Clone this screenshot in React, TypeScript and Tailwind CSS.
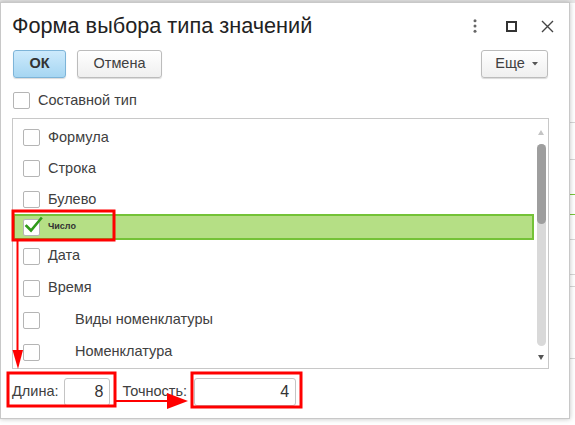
import React from 'react';

const font = { fontFamily: '"Liberation Sans", Arial, sans-serif' };

const Box = ({ checked = false }: { checked?: boolean }) => (
  <span className="relative flex h-[17px] w-[17px] shrink-0 items-center justify-center rounded-[2px] border border-[#b5b5b5] bg-white">
    {checked && (
      <svg width="20" height="18" viewBox="0 0 20 18" className="absolute -top-[4px] left-[0px]">
        <path d="M2.5 10 L7 14.5 L17 2.5" fill="none" stroke="#2f9a1a" strokeWidth="2.6" strokeLinecap="square" />
      </svg>
    )}
  </span>
);

const rows = [
  { label: 'Формула' },
  { label: 'Строка' },
  { label: 'Булево' },
];

const rowsAfter = [
  { label: 'Дата', indent: false },
  { label: 'Время', indent: false },
  { label: 'Виды номенклатуры', indent: true },
  { label: 'Номенклатура', indent: true },
];

export default function App() {
  return (
    <div className="relative h-[425px] w-[575px] overflow-hidden bg-white text-[#404040]" style={font}>
      {/* page behind the window */}
      <div className="absolute inset-0 flex flex-col">
        <div className="h-[3px] bg-[#e6e6e6]" />
        <div className="ml-auto flex w-[6px] flex-1 flex-col">
          <div className="h-[120px] border-b border-[#d6d6d6]" />
          <div className="h-[37px] border-b border-[#d6d6d6]" />
          <div className="h-[35px] border-b border-[#79c43a]" />
          <div className="h-[20px] border-b border-[#79c43a]" />
          <div className="h-[25px] border-b border-[#d6d6d6]" />
          <div className="h-[35px] border-b border-[#d6d6d6]" />
          <div className="h-[12px] border-b border-[#d6d6d6]" />
          <div className="h-[72px] border-b border-[#d6d6d6]" />
        </div>
      </div>

      {/* window */}
      <div className="absolute left-0 top-[2px] flex h-[417px] w-[570px] flex-col border border-[#c8c8c8] bg-white shadow-[0_0_5px_rgba(0,0,0,0.25)]">
        <div className="flex h-[46px] shrink-0 items-center pl-[11px] pr-[15px]">
          <span className="flex-1 text-[21.7px] leading-[24px] text-[#222]">Форма выбора типа значений</span>
          <svg width="4" height="14" viewBox="0 0 4 14" className="mr-[29px]">
            <circle cx="2" cy="1.8" r="1.5" fill="#666" />
            <circle cx="2" cy="7" r="1.5" fill="#666" />
            <circle cx="2" cy="12.2" r="1.5" fill="#666" />
          </svg>
          <svg width="11" height="11" viewBox="0 0 11 11" className="mr-[24px]">
            <rect x="1" y="1" width="9" height="9" fill="none" stroke="#333" strokeWidth="2" />
          </svg>
          <svg width="13" height="13" viewBox="0 0 13 13">
            <path d="M1 1 L12 12 M12 1 L1 12" stroke="#444" strokeWidth="1.4" />
          </svg>
        </div>

        <div className="mt-[1px] flex h-[28px] shrink-0 items-center pl-[12px] pr-[21px]">
          <button className="flex h-[28px] w-[53px] items-center justify-center rounded-[3px] border border-[#7db4d8] bg-gradient-to-b from-[#cdeafc] to-[#a6d6f2] text-[14.5px] font-bold text-[#333] shadow-[0_1px_1px_rgba(0,0,0,0.15)]">
            ОК
          </button>
          <button className="ml-[11px] flex h-[28px] w-[85px] items-center justify-center rounded-[3px] border border-[#bcbcbc] bg-gradient-to-b from-white to-[#efefef] text-[14.5px] text-[#404040] shadow-[0_1px_1px_rgba(0,0,0,0.15)]">
            Отмена
          </button>
          <button className="ml-auto flex h-[28px] w-[67px] items-center justify-center gap-[7px] rounded-[3px] border border-[#bcbcbc] bg-gradient-to-b from-white to-[#efefef] pl-[4px] text-[14.5px] text-[#404040] shadow-[0_1px_1px_rgba(0,0,0,0.15)]">
            Еще
            <svg width="6" height="4" viewBox="0 0 6 4">
              <path d="M0 0 L6 0 L3 3.5 Z" fill="#555" />
            </svg>
          </button>
        </div>

        <div className="mt-[14px] flex h-[17px] shrink-0 items-center gap-[8px] pl-[12px]">
          <Box />
          <span className="text-[14.5px]">Составной тип</span>
        </div>

        {/* types list */}
        <div className="ml-[11px] mt-[9px] flex h-[251px] w-[537px] shrink-0 overflow-hidden border border-[#c8c8c8]">
          <div className="flex w-[521px] flex-col pt-[3px]">
            {rows.map((r) => (
              <div key={r.label} className="flex h-[31px] shrink-0 items-center gap-[8px] pl-[10px]">
                <Box />
                <span className="text-[14.5px]">{r.label}</span>
              </div>
            ))}
            <div className="-mt-[1px] flex h-[26px] shrink-0 items-center gap-[8px] border-2 border-[#74c237] bg-[#b5df85] pl-[8px]">
              <Box checked />
              <span className="text-[9px] font-bold text-[#333]">Число</span>
            </div>
            {rowsAfter.map((r) => (
              <div key={r.label} className="flex h-[32px] shrink-0 items-center pl-[10px]">
                <Box />
                <span className={r.indent ? 'ml-[35px] text-[14.5px]' : 'ml-[8px] text-[14.5px]'}>{r.label}</span>
              </div>
            ))}
          </div>
          <div className="flex flex-1 flex-col items-center pt-[11px] pb-[8px]">
            <svg width="6" height="5" viewBox="0 0 6 5">
              <path d="M0 5 L6 5 L3 0 Z" fill="#c4c4c4" />
            </svg>
            <div className="mt-[9px] flex w-[9px] flex-1 flex-col rounded-full bg-[#d9d9d9]">
              <div className="h-[80px] rounded-full bg-[#9e9e9e]" />
            </div>
            <svg width="6" height="5" viewBox="0 0 6 5" className="mt-[9px]">
              <path d="M0 0 L6 0 L3 5 Z" fill="#555" />
            </svg>
          </div>
        </div>

        <div className="mt-[9px] flex h-[28px] shrink-0 items-center pl-[11px] text-[14.5px]">
          <span>Длина:</span>
          <div className="ml-[6px] flex h-[28px] w-[46px] items-center justify-end rounded-[3px] border border-[#c4c4c4] pr-[6px] text-[16px] text-[#333]">
            8
          </div>
          <span className="ml-[12px]">Точность:</span>
          <div className="ml-[7px] flex h-[28px] w-[102px] items-center justify-end rounded-[3px] border border-[#c4c4c4] pr-[6px] text-[16px] text-[#333]">
            4
          </div>
        </div>
      </div>

      {/* red annotations */}
      <svg className="pointer-events-none absolute left-0 top-0" width="575" height="425" viewBox="0 0 575 425">
        <rect x="13" y="211" width="101" height="29" fill="none" stroke="#ff0000" strokeWidth="3" />
        <rect x="8" y="373" width="107" height="33" fill="none" stroke="#ff0000" strokeWidth="3" />
        <rect x="192" y="373" width="109" height="34" fill="none" stroke="#ff0000" strokeWidth="3" />
        <line x1="17.5" y1="241" x2="17.5" y2="352" stroke="#ff0000" strokeWidth="2" />
        <path d="M12.5 350 L23 350 L18 369 Z" fill="#ff0000" />
        <line x1="116" y1="401" x2="170" y2="401" stroke="#ff0000" strokeWidth="2" />
        <path d="M167 393 L188 401 L167 409 Z" fill="#ff0000" />
      </svg>
    </div>
  );
}
